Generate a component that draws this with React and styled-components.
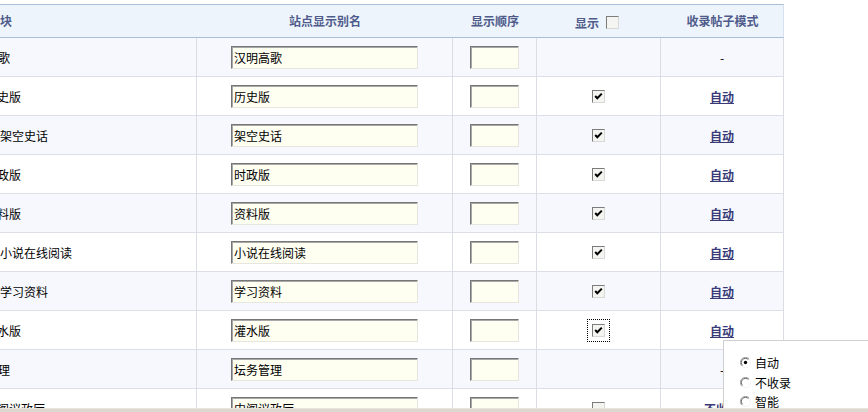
import React from 'react';
import styled, { createGlobalStyle } from 'styled-components';

const GlobalStyle = createGlobalStyle`
	html, body {
		margin: 0;
		padding: 0;
		background: #fff;
		overflow: hidden;
	}
	body {
		font-family: "Noto Sans CJK SC", "DejaVu Sans", sans-serif;
		font-size: 12px;
		color: #000;
	}
`;

const forums = [
	{ name: '汉明高歌', indent: 2, category: true },
	{ name: '历史版', indent: 25, checked: true, mode: '自动' },
	{ name: '架空史话', indent: 40, checked: true, mode: '自动' },
	{ name: '时政版', indent: 25, checked: true, mode: '自动' },
	{ name: '资料版', indent: 25, checked: true, mode: '自动' },
	{ name: '小说在线阅读', indent: 40, checked: true, mode: '自动' },
	{ name: '学习资料', indent: 40, checked: true, mode: '自动' },
	{ name: '灌水版', indent: 25, checked: true, mode: '自动', focused: true },
	{ name: '坛务管理', indent: 2, category: true },
	{ name: '内阁议政厅', indent: 25, checked: false, mode: '不收录' },
];

const CheckBox = ({ checked, focused }) => (
	<FocusRing $focused={focused}>
		<StyleBox>
			{checked && (
				<svg width='9' height='9' viewBox='0 0 9 9'>
					<polyline
						points='1.2,4 3.3,6.2 7.8,1.6'
						fill='none'
						stroke='#000'
						strokeWidth='2'
					/>
				</svg>
			)}
		</StyleBox>
	</FocusRing>
);

const Radio = ({ selected }) => (
	<svg width='11' height='11' viewBox='0 0 12 12'>
		<circle cx='6' cy='6' r='5' fill='#fff' />
		<path d='M10 2 A5.5 5.5 0 0 0 2 10' fill='none' stroke='#9a9a9a' strokeWidth='1' />
		<path d='M9.2 2.8 A4.5 4.5 0 0 0 2.8 9.2' fill='none' stroke='#5a5a5a' strokeWidth='1' />
		<path d='M2 10 A5.5 5.5 0 0 0 10 2' fill='none' stroke='#f2f2f2' strokeWidth='1' />
		{selected && <circle cx='6' cy='6' r='1.8' fill='#000' />}
	</svg>
);

const App = () => {
	return (
		<StyleScreen>
			<GlobalStyle />
			<StyleViewport>
				<StyleTable>
					<StyleHeadRow>
						<StyleHeadCell $indent={28}>版块</StyleHeadCell>
						<StyleHeadCell $center>站点显示别名</StyleHeadCell>
						<StyleHeadCell $center>显示顺序</StyleHeadCell>
						<StyleHeadCell $center>
							<StyleHeadToggle>
								显示
								<StyleBox />
							</StyleHeadToggle>
						</StyleHeadCell>
						<StyleHeadCell $center>收录帖子模式</StyleHeadCell>
					</StyleHeadRow>
					{forums.map((f, i) => (
						<StyleRow key={f.name} $light={i % 2 === 0}>
							<StyleCell $indent={f.indent}>{f.name}</StyleCell>
							<StyleCell $center>
								<StyleInput $width={187} defaultValue={f.name} />
							</StyleCell>
							<StyleCell $center>
								<StyleInput $width={49} defaultValue='' />
							</StyleCell>
							<StyleCell $center>
								{!f.category && (
									<CheckBox checked={f.checked} focused={f.focused} />
								)}
							</StyleCell>
							<StyleCell $center>
								{f.category ? '-' : <StyleLink>{f.mode}</StyleLink>}
							</StyleCell>
						</StyleRow>
					))}
				</StyleTable>
				<StyleMenu>
					<StyleOption>
						<Radio selected />
						<span>自动</span>
					</StyleOption>
					<StyleOption>
						<Radio />
						<span>不收录</span>
					</StyleOption>
					<StyleOption>
						<Radio />
						<span>智能</span>
					</StyleOption>
				</StyleMenu>
			</StyleViewport>
			<StyleEdge />
		</StyleScreen>
	);
};

const columns = '237px 256px 84px 124px 123px';

const StyleScreen = styled.div`
	height: 412px;
	display: flex;
	flex-direction: column;
	overflow: hidden;
`;

const StyleViewport = styled.div`
	position: relative;
	flex: 1;
	overflow: hidden;
	padding-top: 4px;
	box-sizing: border-box;
`;

const StyleEdge = styled.div`
	height: 4px;
	flex: none;
	background: #dcd8d0;
	border-top: 1px solid #e8e5df;
	box-sizing: border-box;
`;

const StyleTable = styled.div`
	width: 824px;
	margin-left: -40px;
`;

const StyleHeadRow = styled.div`
	display: grid;
	grid-template-columns: ${columns};
	height: 34px;
	box-sizing: border-box;
	background: #eef4fc;
	border-top: 1px solid #a9bfd7;
	border-bottom: 1px solid #a9bfd7;
	border-right: 1px solid #d6e2ef;
`;

const StyleHeadCell = styled.div`
	display: flex;
	align-items: center;
	justify-content: ${(p) => (p.$center ? 'center' : 'flex-start')};
	padding-left: ${(p) => (p.$indent ? `${p.$indent}px` : '0')};
	padding-bottom: 2px;
	color: #4f5c8b;
	font-weight: bold;
	white-space: nowrap;
`;

const StyleHeadToggle = styled.span`
	display: flex;
	align-items: center;
	gap: 7px;
	padding-top: 5px;
	margin-left: -4px;
`;

const StyleRow = styled.div`
	display: grid;
	grid-template-columns: ${columns};
	height: 39px;
	box-sizing: border-box;
	background: ${(p) => (p.$light ? '#f6f8fd' : '#ffffff')};
	border-bottom: 1px solid #dcdfe6;
`;

const StyleCell = styled.div`
	display: flex;
	align-items: center;
	justify-content: ${(p) => (p.$center ? 'center' : 'flex-start')};
	padding-left: ${(p) => (p.$indent ? `${p.$indent}px` : '0')};
	border-right: 1px solid #dadde4;
	white-space: nowrap;
	overflow: hidden;
`;

const StyleInput = styled.input`
	width: ${(p) => p.$width}px;
	height: 23px;
	box-sizing: border-box;
	margin: 0;
	padding: 0 0 0 2px;
	border: 1px solid;
	border-color: #767676 #e6e6de #e6e6de #767676;
	box-shadow: inset 1px 1px 0 #a8a8a8;
	background: #fefef1;
	font-family: "Noto Sans CJK SC", sans-serif;
	font-size: 12px;
	color: #000;
	outline: none;
`;

const FocusRing = styled.span`
	display: inline-flex;
	padding: 4px;
	outline: ${(p) => (p.$focused ? '1px dotted #000' : 'none')};
	margin-right: 1px;
`;

const StyleBox = styled.span`
	display: inline-flex;
	align-items: center;
	justify-content: center;
	width: 13px;
	height: 13px;
	box-sizing: border-box;
	border: 1px solid;
	border-color: #7c7c7c #d8d8d8 #d8d8d8 #7c7c7c;
	background: #f4f4f0;
`;

const StyleLink = styled.a`
	color: #383b78;
	font-weight: bold;
	text-decoration: underline;
	cursor: pointer;
`;

const StyleMenu = styled.div`
	position: absolute;
	left: 723px;
	top: 340px;
	width: 160px;
	height: 90px;
	box-sizing: border-box;
	background: #fff;
	border-top: 1px solid #d0d0d0;
	border-left: 1px solid #d0d0d0;
	padding: 12px 0 0 16px;
	display: flex;
	flex-direction: column;
`;

const StyleOption = styled.label`
	display: flex;
	align-items: center;
	gap: 4px;
	height: 19.5px;
	font-size: 12px;
	color: #000;
`;

export default App;
